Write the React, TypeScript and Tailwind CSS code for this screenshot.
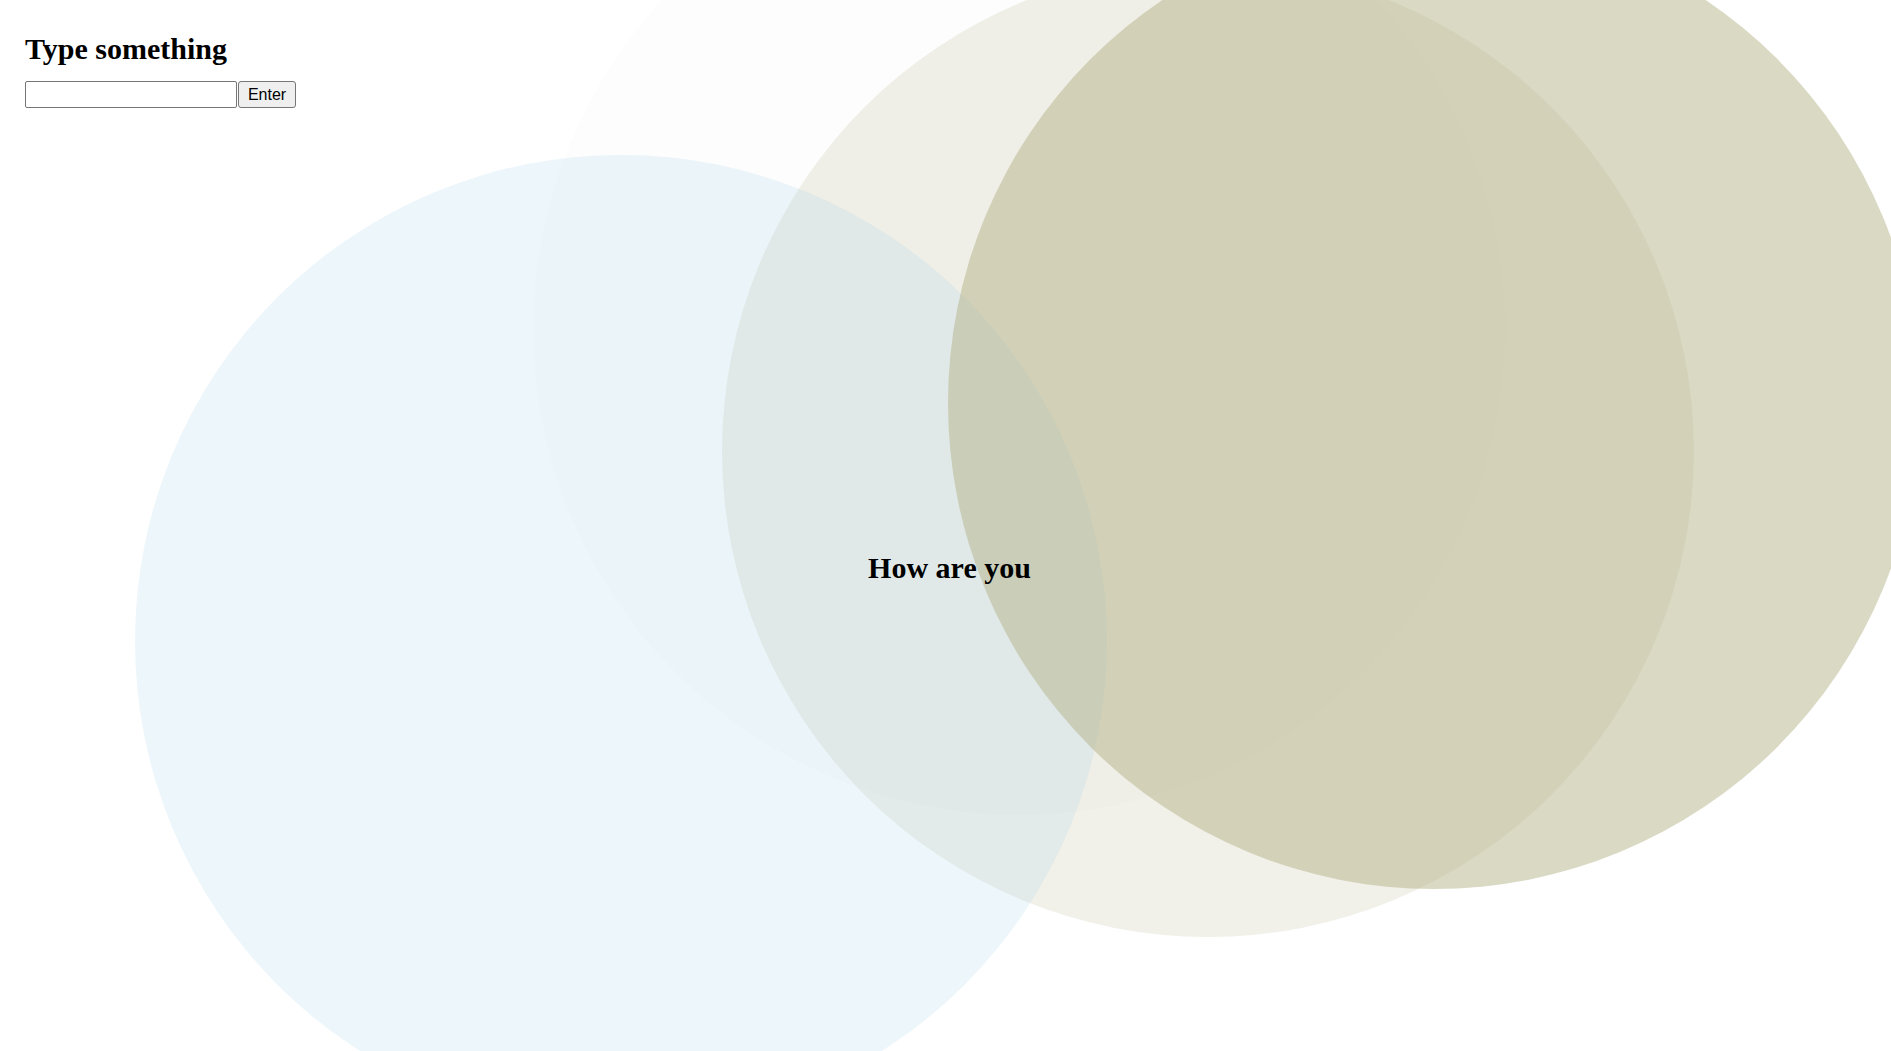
function Bubble({ className }: { className: string }) {
  return <div className={`absolute w-[972px] h-[972px] rounded-full pointer-events-none ${className}`}></div>
}

export default function App() {
  return (
    <div className="relative w-full h-screen overflow-hidden bg-white font-['Liberation_Serif','Times_New_Roman',serif] text-black">
      {/* background bubbles */}
      <Bubble className="left-[533px] top-[-157px] bg-[rgba(0,0,0,0.007)]" />
      <Bubble className="left-[722px] top-[-35px] bg-[rgba(180,176,136,0.18)]" />
      <Bubble className="left-[135px] top-[155px] bg-[rgba(173,214,232,0.22)]" />
      <Bubble className="left-[948px] top-[-83px] bg-[rgba(178,175,131,0.48)]" />

      <div className="relative flex flex-col pt-[32px] px-[25px]">
        <h1 className="text-[30px] leading-[34px] font-bold">Type something</h1>
        <div className="flex items-center gap-[1px] mt-[15px]">
          <input
            type="text"
            className="w-[212px] h-[27px] px-[2px] bg-white border border-[#767676] rounded-[2px] text-[16px] font-['Liberation_Sans',Arial,sans-serif] outline-none"
          />
          <button className="w-[58px] h-[27px] bg-[#efefef] border border-[#767676] rounded-[3px] text-[16px] leading-none font-['Liberation_Sans',Arial,sans-serif] text-black">
            Enter
          </button>
        </div>
        <h2 className="mt-[443px] pl-[8px] text-center text-[30px] leading-[34px] font-bold">How are you</h2>
      </div>
    </div>
  )
}
